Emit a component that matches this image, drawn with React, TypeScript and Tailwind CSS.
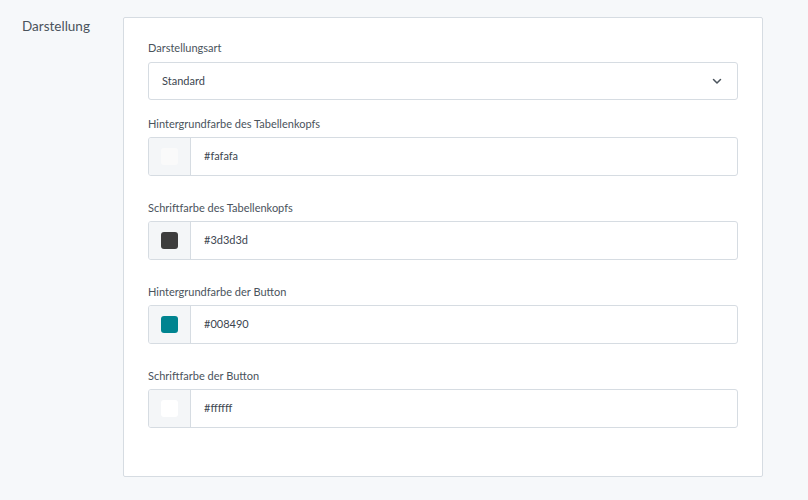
import React from "react";

const fields = [
  { label: "Hintergrundfarbe des Tabellenkopfs", value: "#fafafa", swatch: "bg-[#fafafa]" },
  { label: "Schriftfarbe des Tabellenkopfs", value: "#3d3d3d", swatch: "bg-[#3d3d3d]" },
  { label: "Hintergrundfarbe der Button", value: "#008490", swatch: "bg-[#008490]" },
  { label: "Schriftfarbe der Button", value: "#ffffff", swatch: "bg-[#ffffff]" },
];

export default function App() {
  return (
    <div
      className="w-[808px] h-[500px] bg-[#f6f8fa] flex text-[#3d4650]"
      style={{ fontFamily: "Lato, 'Open Sans', sans-serif" }}
    >
      <div className="w-[123px] pl-[22px] pt-[16px] text-[13.5px] text-[#4a535c]">Darstellung</div>
      <div className="mt-[17px] w-[640px] h-[460px] bg-white border border-[#d6dce2] rounded-[2px] px-[24px] pt-[23px]">
        <div className="text-[11px] leading-[14px] text-[#4a535c] h-[21px]">Darstellungsart</div>
        <div className="h-[38px] border border-[#d6dce2] rounded-[3px] flex items-center pl-[13px] pr-[14px] justify-between">
          <span className="text-[11px] text-[#3d4650]">Standard</span>
          <svg width="12" height="12" viewBox="0 0 24 24" fill="none" stroke="#4a535c" strokeWidth="3" strokeLinecap="round" strokeLinejoin="round">
            <path d="M5 9l7 7 7-7" />
          </svg>
        </div>
        <div className="flex flex-col mt-[17px] gap-[25px]">
          {fields.map((f, i) => (
            <div key={i} className="flex flex-col">
              <div className="text-[11px] leading-[14px] text-[#4a535c] h-[20px]">{f.label}</div>
              <div className="h-[39px] border border-[#d6dce2] rounded-[3px] flex overflow-hidden">
                <div className="w-[42px] bg-[#f4f6f8] border-r border-[#d6dce2] flex items-center justify-center">
                  <div className={`w-[17px] h-[17px] rounded-[3px] ${f.swatch}`} />
                </div>
                <div className="flex items-center pl-[13px] text-[11px] text-[#3d4650]">{f.value}</div>
              </div>
            </div>
          ))}
        </div>
      </div>
    </div>
  );
}
